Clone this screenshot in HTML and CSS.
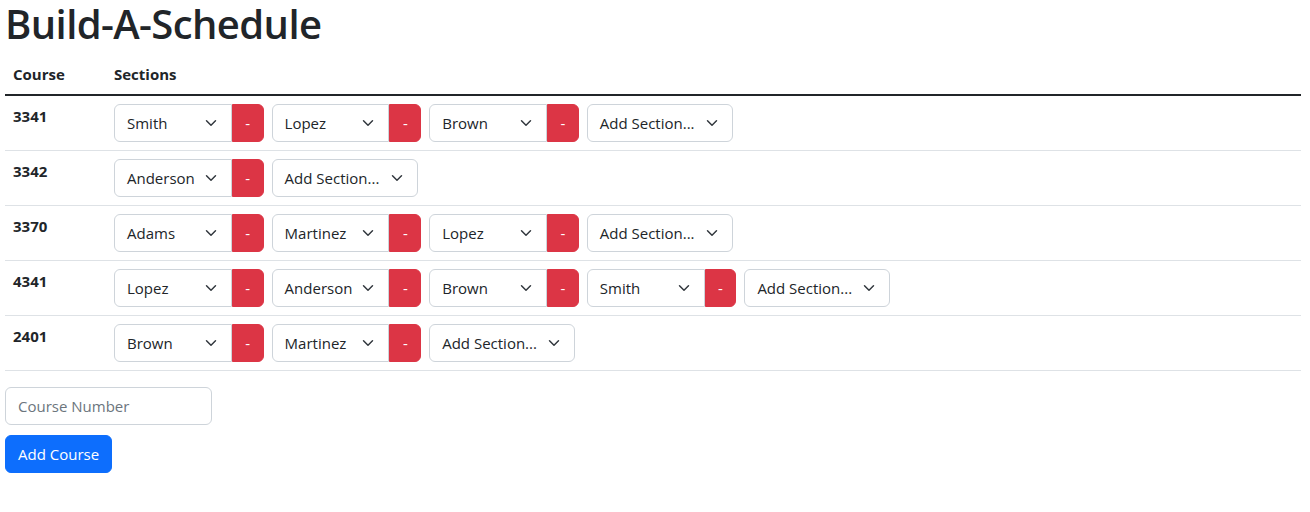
FILE: index.html
```html
<!DOCTYPE html>
<html lang="en">
<head>
<meta charset="utf-8">
<title>Build-A-Schedule</title>
<link rel="stylesheet" href="styles.css">
</head>
<body>
<div class="page">
  <h1 class="title">Build-A-Schedule</h1>
  <table class="sched">
    <thead>
      <tr><th class="col-course">Course</th><th>Sections</th></tr>
    </thead>
    <tbody>
      <tr>
        <th class="course">3341</th>
        <td><div class="sections">
          <div class="group"><div class="sel">Smith</div><button class="rm">-</button></div>
          <div class="group"><div class="sel">Lopez</div><button class="rm">-</button></div>
          <div class="group"><div class="sel">Brown</div><button class="rm">-</button></div>
          <div class="sel add">Add Section...</div>
        </div></td>
      </tr>
      <tr>
        <th class="course">3342</th>
        <td><div class="sections">
          <div class="group"><div class="sel">Anderson</div><button class="rm">-</button></div>
          <div class="sel add">Add Section...</div>
        </div></td>
      </tr>
      <tr>
        <th class="course">3370</th>
        <td><div class="sections">
          <div class="group"><div class="sel">Adams</div><button class="rm">-</button></div>
          <div class="group"><div class="sel">Martinez</div><button class="rm">-</button></div>
          <div class="group"><div class="sel">Lopez</div><button class="rm">-</button></div>
          <div class="sel add">Add Section...</div>
        </div></td>
      </tr>
      <tr>
        <th class="course">4341</th>
        <td><div class="sections">
          <div class="group"><div class="sel">Lopez</div><button class="rm">-</button></div>
          <div class="group"><div class="sel">Anderson</div><button class="rm">-</button></div>
          <div class="group"><div class="sel">Brown</div><button class="rm">-</button></div>
          <div class="group"><div class="sel">Smith</div><button class="rm">-</button></div>
          <div class="sel add">Add Section...</div>
        </div></td>
      </tr>
      <tr>
        <th class="course">2401</th>
        <td><div class="sections">
          <div class="group"><div class="sel">Brown</div><button class="rm">-</button></div>
          <div class="group"><div class="sel">Martinez</div><button class="rm">-</button></div>
          <div class="sel add">Add Section...</div>
        </div></td>
      </tr>
    </tbody>
  </table>
  <input class="course-input" type="text" placeholder="Course Number">
  <button class="add-course">Add Course</button>
</div>
</body>
</html>
```
FILE: styles.css
```css
* { box-sizing: border-box; }
body {
  margin: 0;
  font-family: "Open Sans", "Noto Sans", "Liberation Sans", sans-serif;
  font-size: 15px;
  line-height: 24px;
  color: #212529;
  background: #fff;
}
.page { padding: 0 9px 0 5px; }
.title {
  margin: 0 0 6px;
  font-size: 40px;
  font-weight: 600;
  letter-spacing: -0.6px;
  line-height: 48px;
}
.sched {
  width: 100%;
  border-collapse: collapse;
  margin-bottom: 16px;
}
.sched th, .sched td {
  padding: 8px;
  text-align: left;
  vertical-align: top;
  border-bottom: 1px solid #dee2e6;
}
.sched thead th {
  font-weight: 700;
  border-bottom: 2px solid #212529;
}
.col-course { width: 101px; }
.course { font-weight: 700; }
.sections {
  display: flex;
  flex-wrap: wrap;
  gap: 8px;
}
.group { display: flex; }
.sel {
  width: 117.8px;
  height: 38px;
  padding: 6px 36px 6px 12px;
  border: 1px solid #ced4da;
  border-radius: 6px;
  white-space: nowrap;
  background: #fff url("data:image/svg+xml,%3csvg xmlns='http://www.w3.org/2000/svg' viewBox='0 0 16 16'%3e%3cpath fill='none' stroke='%23343a40' stroke-linecap='round' stroke-linejoin='round' stroke-width='2' d='m2 5 6 6 6-6'/%3e%3c/svg%3e") no-repeat right 12px center / 16px 12px;
}
.group .sel {
  border-top-right-radius: 0;
  border-bottom-right-radius: 0;
}
.sel.add { width: 146px; }
.rm {
  width: 31.8px;
  height: 38px;
  padding: 0;
  border: 1px solid #dc3545;
  background: #dc3545;
  color: #fff;
  font: inherit;
  border-radius: 0 6px 6px 0;
}
.course-input {
  display: block;
  width: 207px;
  height: 38px;
  padding: 6px 12px;
  border: 1px solid #ced4da;
  border-radius: 6px;
  font: inherit;
  color: #212529;
}
.course-input::placeholder { color: #6c757d; }
.add-course {
  display: block;
  margin-top: 10px;
  height: 38px;
  padding: 6px 12px;
  border: 1px solid #0d6efd;
  background: #0d6efd;
  color: #fff;
  font: inherit;
  border-radius: 6px;
}
```
